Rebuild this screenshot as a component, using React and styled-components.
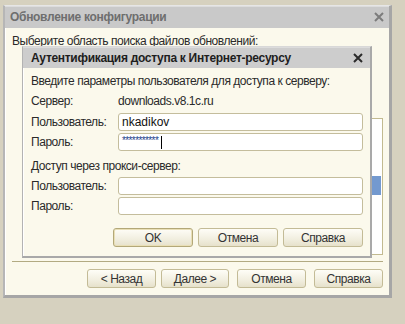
import styled, { createGlobalStyle } from "styled-components";

const GlobalStyle = createGlobalStyle`
  body {
    margin: 0;
    background: #d6d1bf;
    font-family: "Liberation Sans", Arial, sans-serif;
    font-size: 12px;
    letter-spacing: -0.45px;
    color: #2a2a2a;
  }
`;

function CloseIcon({ color }) {
  return (
    <svg width="10" height="10" viewBox="0 0 10 10">
      <path d="M1 1 L9 9 M9 1 L1 9" stroke={color} strokeWidth="2" fill="none" />
    </svg>
  );
}

export default function App() {
  return (
    <>
      <GlobalStyle />
      <Window>
        <TitleBar>
          <Title $muted>Обновление конфигурации</Title>
          <CloseIcon color="#7c7c7c" />
        </TitleBar>
        <Body>
          <Text>Выберите область поиска файлов обновлений:</Text>
          <HiddenLine>.</HiddenLine>
          <ListBox>
            <SelectedRow />
          </ListBox>
          <Separator />
          <ButtonRow>
            <Button $w={69}>&lt; Назад</Button>
            <Button $w={68} style={{ marginLeft: -3 }}>Далее &gt;</Button>
            <Button $w={69}>Отмена</Button>
            <Button $w={69}>Справка</Button>
          </ButtonRow>
        </Body>

        <Dialog>
          <TitleBar $inner>
            <Title>Аутентификация доступа к Интернет-ресурсу</Title>
            <CloseIcon color="#2b2b2b" />
          </TitleBar>
          <DialogBody>
            <Text>Введите параметры пользователя для доступа к серверу:</Text>
            <ServerRow>
              <Label>Сервер:</Label>
              <span>downloads.v8.1c.ru</span>
            </ServerRow>
            <Fields>
              <Field>
                <Label>Пользователь:</Label>
                <Input>nkadikov</Input>
              </Field>
              <Field>
                <Label>Пароль:</Label>
                <Input>
                  <Stars>***********</Stars>
                  <Caret />
                </Input>
              </Field>
            </Fields>
            <SectionTitle>Доступ через прокси-сервер:</SectionTitle>
            <Fields $tight>
              <Field>
                <Label>Пользователь:</Label>
                <Input />
              </Field>
              <Field>
                <Label>Пароль:</Label>
                <Input />
              </Field>
            </Fields>
            <DialogButtons>
              <Button $w={80} $default>OK</Button>
              <Button $w={80}>Отмена</Button>
              <Button $w={80}>Справка</Button>
            </DialogButtons>
          </DialogBody>
        </Dialog>
      </Window>
    </>
  );
}

const Window = styled.div`
  position: relative;
  margin: 5px 0 0 3px;
  width: 384px;
  height: 289px;
  display: flex;
  flex-direction: column;
  border-style: solid;
  border-width: 1px 3px 3px 2px;
  border-color: #e6e6e6 #a6a6a6 #a6a6a6 #b6b6b6;
`;

const TitleBar = styled.div`
  height: ${(p) => (p.$inner ? "21px" : "22px")};
  flex: none;
  display: flex;
  align-items: center;
  justify-content: space-between;
  padding: 0 ${(p) => (p.$inner ? "7px" : "5px")} 0 ${(p) => (p.$inner ? "8px" : "5px")};
  background: ${(p) => (p.$inner ? "#cdcdcd" : "#c9c9c9")};
  box-shadow: inset 0 1px 0 #dcdcdc;
`;

const Title = styled.div`
  font-weight: bold;
  font-size: 12px;
  letter-spacing: -0.3px;
  color: ${(p) => (p.$muted ? "#6e6e6e" : "#1e1e1e")};
`;

const Body = styled.div`
  flex: 1;
  display: flex;
  flex-direction: column;
  background: #fbf9ec;
  box-shadow: inset 1px 0 0 #ffffff;
  padding: 6px 6px 7px 7px;
`;

const Text = styled.div`
  line-height: 14px;
  white-space: nowrap;
`;

const HiddenLine = styled.div`
  line-height: 14px;
  margin-top: 33px;
  padding-right: 12px;
  text-align: right;
`;

const ListBox = styled.div`
  box-sizing: border-box;
  flex: none;
  margin: 23px 0 0 24px;
  height: 137px;
  background: #ffffff;
  border: 1px solid #c2ba90;
  padding-top: 57px;
`;

const SelectedRow = styled.div`
  height: 19px;
  margin-right: 1px;
  background: #7399cf;
`;

const Separator = styled.div`
  margin-top: 6px;
  height: 1px;
  flex: none;
  background: #b2aa82;
`;

const ButtonRow = styled.div`
  margin-top: 7px;
  display: flex;
  justify-content: flex-end;
  gap: 8px;
`;

const Button = styled.div`
  width: ${(p) => p.$w}px;
  height: 19px;
  box-sizing: border-box;
  display: flex;
  align-items: center;
  justify-content: center;
  border: 1px solid ${(p) => (p.$default ? "#b3a878" : "#c3bb96")};
  border-radius: 3px;
  background: linear-gradient(#fefdf7, #f1eedf 60%, #e6e1cb);
  box-shadow: ${(p) => (p.$default ? "inset 0 0 0 1px #e9dfb6" : "none")};
  color: #333333;
  white-space: nowrap;
`;

const Dialog = styled.div`
  position: absolute;
  left: 17px;
  top: 40px;
  width: 347px;
  height: 209px;
  display: flex;
  flex-direction: column;
  border-style: solid;
  border-width: 1px 2px 2px 1px;
  border-color: #d8d8d8 #a9a9a9 #a9a9a9 #b3b3b3;
`;

const DialogBody = styled.div`
  flex: 1;
  background: #fbf9ec;
  box-shadow: inset 1px 0 0 #ffffff;
  padding: 6px 7px 8px 8px;
`;

const ServerRow = styled.div`
  margin-top: 6px;
  display: flex;
  line-height: 14px;
`;

const Label = styled.div`
  width: 87px;
  flex: none;
  white-space: nowrap;
`;

const Fields = styled.div`
  margin-top: ${(p) => (p.$tight ? "4px" : "5px")};
  display: flex;
  flex-direction: column;
  gap: 2px;
`;

const Field = styled.div`
  display: flex;
  align-items: center;
`;

const Input = styled.div`
  flex: 1;
  height: 18px;
  box-sizing: border-box;
  display: flex;
  align-items: center;
  padding-left: 3px;
  background: #ffffff;
  border: 1px solid #c4bd9c;
  border-radius: 3px;
  color: #111111;
  letter-spacing: 0;
`;

const Stars = styled.span`
  font-size: 10px;
  letter-spacing: -0.6px;
  color: #1d3f8c;
  line-height: 10px;
  margin-top: -3px;
`;

const Caret = styled.span`
  width: 1px;
  height: 13px;
  margin-left: 3px;
  background: #000000;
`;

const SectionTitle = styled.div`
  margin-top: 8px;
  line-height: 14px;
`;

const DialogButtons = styled.div`
  margin-top: 13px;
  display: flex;
  justify-content: flex-end;
  gap: 5px;
`;
